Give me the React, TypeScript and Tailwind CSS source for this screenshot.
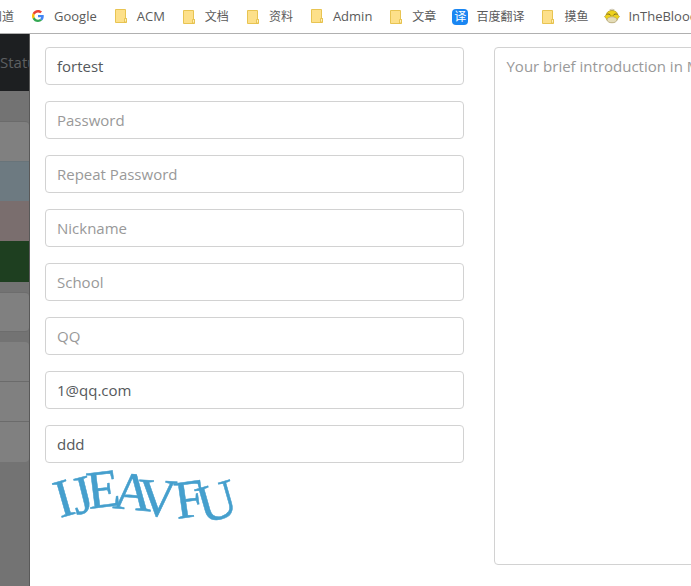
import React from "react";

function FolderIcon() {
  return (
    <svg viewBox="0 0 16 16" className="h-4 w-4 shrink-0" aria-hidden="true">
      <path d="M2.500 1.500h10v9h1v4h-11z" fill="#fde08a" stroke="#e8c452" />
      <path d="M11.500 14v-3.500h2V14z" fill="#fff0b8" stroke="#e3bd45" strokeWidth="0.8" />
    </svg>
  );
}

function GoogleIcon() {
  return (
    <svg viewBox="0 0 48 48" className="h-4 w-4 shrink-0 p-0.5" aria-hidden="true">
      <path fill="#EA4335" d="M24 9.500c3.500 0 6.700 1.200 9.200 3.600l6.900-6.900C35.900 2.400 30.500 0 24 0 14.600 0 6.500 5.400 2.600 13.200l8 6.200C12.400 13.700 17.700 9.500 24 9.500z" />
      <path fill="#4285F4" d="M47 24.600c0-1.600-.2-3.100-.4-4.600H24v9h12.900c-.6 3-2.200 5.500-4.700 7.200l7.700 6C44.400 38 47 32 47 24.600z" />
      <path fill="#FBBC05" d="M10.500 28.600c-.5-1.500-.8-3-.8-4.600s.3-3.100.8-4.600l-8-6.200C.9 16.500 0 20.100 0 24s.9 7.500 2.600 10.800z" />
      <path fill="#34A853" d="M24 48c6.500 0 11.900-2.100 15.900-5.800l-7.700-6c-2.200 1.500-4.900 2.300-8.200 2.300-6.300 0-11.600-4.200-13.500-9.900l-8 6.200C6.500 42.600 14.600 48 24 48z" />
    </svg>
  );
}

function TranslateIcon() {
  return (
    <span className="flex h-4 w-4 shrink-0 items-center justify-center rounded-sm bg-[#1a86f2] text-xs text-white">
      译
    </span>
  );
}

function DuckIcon() {
  return (
    <svg viewBox="0 0 16 16" className="h-4 w-4 shrink-0" aria-hidden="true">
      <path d="M8 3V.8M7.300 3L6 1.200M8.700 3L10 1.200" stroke="#7d6d34" strokeWidth="0.6" />
      <path d="M8 2.500c3.800 0 5.700 2.300 6 4.700l1.500 1.300-1.500 1.800c-1 2.700-3 4.200-6 4.200s-5-1.500-6-4.200L.5 8.500 2 7.200c.3-2.400 2.200-4.700 6-4.700z" fill="#eed21c" stroke="#a8922b" strokeWidth="0.6" />
      <ellipse cx="8" cy="11.800" rx="5" ry="3" fill="#e4dcb7" stroke="#a89a72" strokeWidth="0.6" />
      <path d="M2.500 6.500c1.500-1 3.500-.5 4.500 1.200M13.500 6.500c-1.500-1-3.500-.5-4.500 1.200" fill="none" stroke="#6d5d22" strokeWidth="0.9" />
    </svg>
  );
}

const bookmarks = [
  { label: "Google", icon: <GoogleIcon />, size: "text-[13px]" },
  { label: "ACM", icon: <FolderIcon />, size: "text-[13px]" },
  { label: "文档", icon: <FolderIcon />, size: "text-xs" },
  { label: "资料", icon: <FolderIcon />, size: "text-xs" },
  { label: "Admin", icon: <FolderIcon />, size: "text-[13px]" },
  { label: "文章", icon: <FolderIcon />, size: "text-xs" },
  { label: "百度翻译", icon: <TranslateIcon />, size: "text-xs" },
  { label: "摸鱼", icon: <FolderIcon />, size: "text-xs" },
  { label: "InTheBlood", icon: <DuckIcon />, size: "text-[13px]" },
];

function BookmarkBar() {
  return (
    <nav className="flex h-[34px] items-center gap-4 overflow-hidden border-b border-[#b0b0b0] bg-white text-xs whitespace-nowrap text-[#5a5a5a]">
      <a href="#zhidao" className="-ml-2.5 shrink-0">知道</a>
      {bookmarks.map((b) => (
        <a key={b.label} href="#bookmark" className={`flex shrink-0 items-center gap-2 ${b.size}`}>
          {b.icon}
          <span>{b.label}</span>
        </a>
      ))}
    </nav>
  );
}

function Backdrop() {
  return (
    <div className="w-[30px] shrink-0 overflow-hidden border-r border-[#595959] bg-[#737373]">
      <div className="flex h-[57px] items-center bg-[#1d1f21] text-[15px] text-[#5d5f61]">Status</div>
      <div className="mt-[30px]">
        <div className="h-10 rounded-tr-sm border-t border-[#6b6b6b] bg-[#808080]" />
        <div className="h-10 border-t border-[#68747a] bg-[#6d7a81]" />
        <div className="h-10 bg-[#7a6e6e]" />
        <div className="h-[41px] bg-[#1e3f20]" />
      </div>
      <div className="mt-2.5 h-10 rounded-r-sm border-y border-[#6d6d6d] bg-[#808080]" />
      <div className="mt-2.5 divide-y divide-[#6b6b6b] rounded-r-sm bg-[#808080]">
        <div className="h-10" />
        <div className="h-10" />
        <div className="h-10" />
      </div>
    </div>
  );
}

const fields = [
  { label: "Username", type: "text", value: "fortest" },
  { label: "Password", type: "password", value: "" },
  { label: "Repeat Password", type: "password", value: "" },
  { label: "Nickname", type: "text", value: "" },
  { label: "School", type: "text", value: "" },
  { label: "QQ", type: "text", value: "" },
  { label: "Email", type: "text", value: "1@qq.com" },
  { label: "Captcha", type: "text", value: "ddd" },
];

const glyphs = [
  { char: "I", x: 15, y: 55, angle: -16 },
  { char: "J", x: 31, y: 52, angle: -14 },
  { char: "E", x: 44, y: 46, angle: -7 },
  { char: "A", x: 67, y: 45, angle: 5 },
  { char: "V", x: 92, y: 52, angle: 3 },
  { char: "F", x: 132, y: 56, angle: -8 },
  { char: "U", x: 158, y: 61, angle: -16 },
];

function Captcha() {
  return (
    <svg viewBox="0 0 200 70" className="h-[70px] w-[200px]" role="img" aria-label="Captcha">
      <g fill="#459fcd" stroke="#459fcd" strokeWidth="0.5" fontSize="54" fontFamily="'Liberation Serif', serif">
        {glyphs.map((g) => (
          <text key={g.char} x={g.x} y={g.y} transform={`rotate(${g.angle} ${g.x} ${g.y})`}>
            {g.char}
          </text>
        ))}
      </g>
    </svg>
  );
}

const control =
  "block w-full rounded border border-[#d2d2d2] bg-white px-[11px] text-[15px] leading-6 text-[#55595c] outline-none placeholder:text-[#999]";

export default function App() {
  return (
    <div className="flex min-h-screen flex-col overflow-hidden bg-white font-['Open_Sans','Noto_Sans_CJK_SC',sans-serif]">
      <BookmarkBar />
      <div className="flex flex-1">
        <Backdrop />
        <main className="min-w-0 flex-1 overflow-hidden bg-white">
          <form className="grid w-[136%] grid-cols-2 gap-[30px] px-[15px] pt-[13px]">
            <div>
              <div className="flex flex-col gap-4">
                {fields.map((f) => (
                  <input
                    key={f.label}
                    type={f.type}
                    aria-label={f.label}
                    placeholder={f.label}
                    defaultValue={f.value}
                    className={`${control} h-[38px]`}
                  />
                ))}
              </div>
              <Captcha />
            </div>
            <textarea
              rows={21}
              aria-label="Introduction"
              placeholder="Your brief introduction in Markdown"
              className={`${control} resize-none self-start py-1.5`}
            />
          </form>
        </main>
      </div>
    </div>
  );
}
